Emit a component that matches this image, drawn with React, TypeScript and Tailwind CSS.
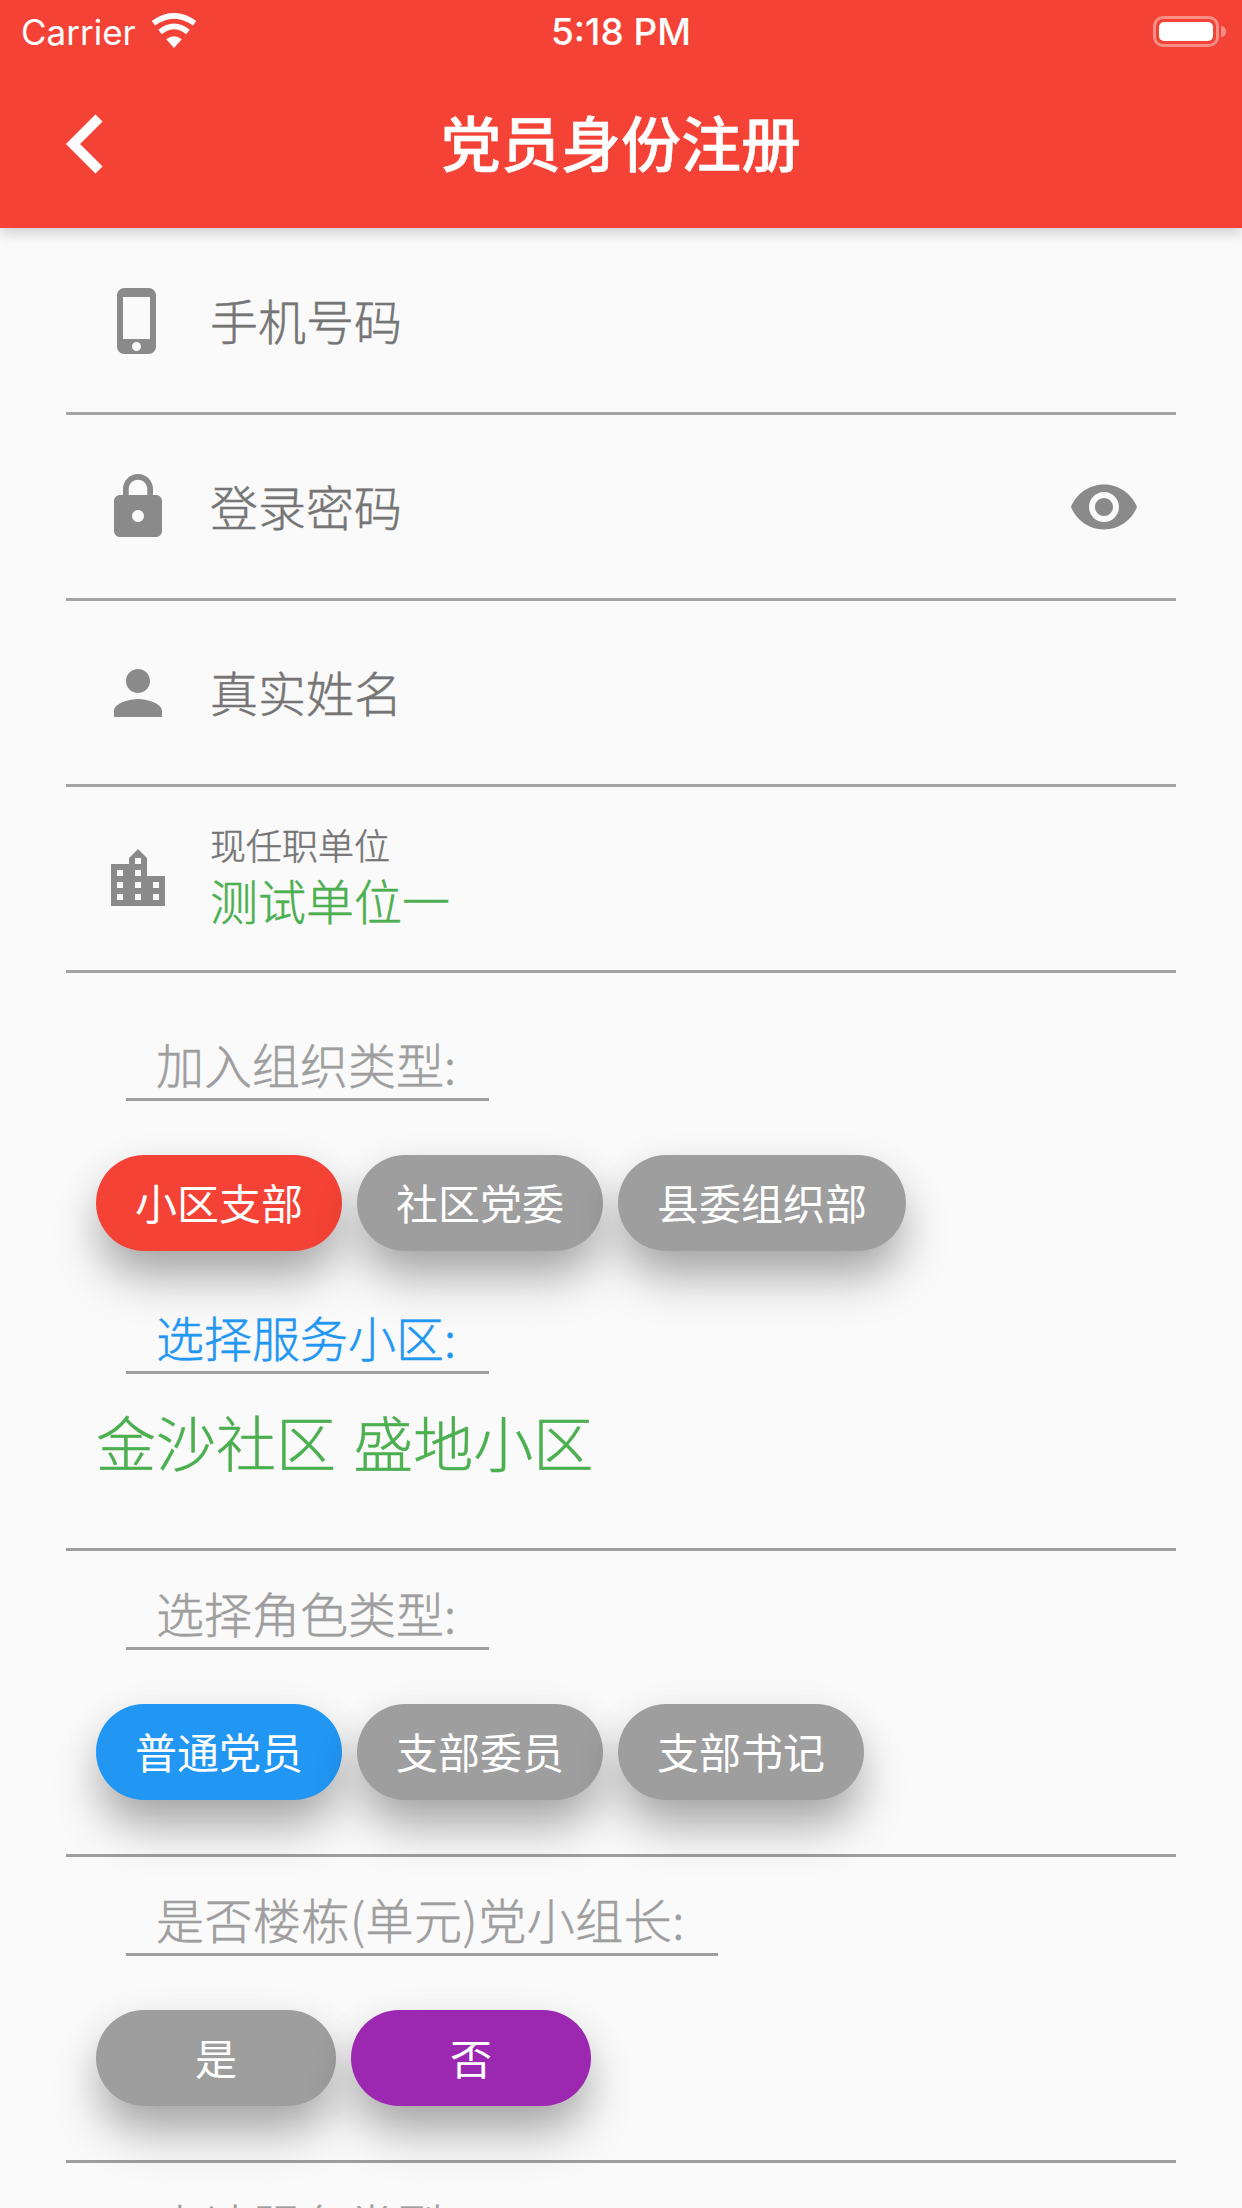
import type { ReactNode } from "react";

const CJK = "font-['Noto_Sans_CJK_SC','Liberation_Sans',sans-serif]";

const ICONS = {
  phone:
    "M15.5 1h-8C6.12 1 5 2.12 5 3.5v17C5 21.88 6.12 23 7.5 23h8c1.38 0 2.5-1.12 2.5-2.5v-17C18 2.12 16.88 1 15.5 1zm-4 21c-.83 0-1.5-.67-1.5-1.5s.67-1.5 1.5-1.5 1.5.67 1.5 1.5-.67 1.5-1.5 1.5zm4.5-4H7V4h9v14z",
  lock: "M18 8h-1V6c0-2.76-2.24-5-5-5S7 3.24 7 6v2H6c-1.1 0-2 .9-2 2v10c0 1.1.9 2 2 2h12c1.1 0 2-.9 2-2V10c0-1.1-.9-2-2-2zm-6 9c-1.1 0-2-.9-2-2s.9-2 2-2 2 .9 2 2-.9 2-2 2zm3.1-9H8.9V6c0-1.71 1.39-3.1 3.1-3.1 1.71 0 3.1 1.39 3.1 3.1v2z",
  eye: "M12 4.5C7 4.5 2.73 7.61 1 12c1.73 4.39 6 7.5 11 7.5s9.27-3.11 11-7.5c-1.73-4.39-6-7.5-11-7.5zM12 17c-2.76 0-5-2.24-5-5s2.24-5 5-5 5 2.24 5 5-2.24 5-5 5zm0-8c-1.66 0-3 1.34-3 3s1.34 3 3 3 3-1.34 3-3-1.34-3-3-3z",
  person:
    "M12 12c2.21 0 4-1.79 4-4s-1.79-4-4-4-4 1.79-4 4 1.79 4 4 4zm0 2c-2.67 0-8 1.34-8 4v2h16v-2c0-2.66-5.33-4-8-4z",
  city: "M15 11V5l-3-3-3 3v2H3v14h18V11h-6zm-8 8H5v-2h2v2zm0-4H5v-2h2v2zm0-4H5V9h2v2zm6 8h-2v-2h2v2zm0-4h-2v-2h2v2zm0-4h-2V9h2v2zm0-4h-2V5h2v2zm6 12h-2v-2h2v2zm0-4h-2v-2h2v2z"
};

function Icon({ d }: { d: string }) {
  return (
    <svg viewBox="0 0 24 24" className="h-[72px] w-[72px] shrink-0 fill-[#8a8a8a]">
      <path d={d} />
    </svg>
  );
}

function StatusBar() {
  return (
    <div className="grid h-[60px] grid-cols-3 items-center text-white">
      <div className="flex items-center">
        <span className="ml-[21px] mt-[2px] font-['Inter',sans-serif] text-[35px] leading-[60px]">Carrier</span>
        <svg viewBox="0 0 44 34" className="mb-[1px] ml-[15px] h-[35px] w-[46px]">
          <path d="M22 34 L14.5 25.5 Q22 19.5 29.5 25.5 Z" fill="#fff" />
          <path d="M8.5 18.5 Q22 7.5 35.5 18.5" fill="none" stroke="#fff" strokeWidth="5.5" />
          <path d="M2 10 Q22 -4.5 42 10" fill="none" stroke="#fff" strokeWidth="5.5" />
        </svg>
      </div>
      <div className="mt-[2px] whitespace-nowrap text-center font-['Inter',sans-serif] text-[37px] font-medium leading-[60px]">
        5:18 PM
      </div>
      <div className="flex items-center justify-end pr-[16px]">
        <div className="h-[31px] w-[66px] rounded-[10px] border-[3px] border-white/40 p-[3px]">
          <div className="h-full w-full rounded-[5px] bg-white" />
        </div>
        <div className="ml-[2px] h-[11px] w-[5px] rounded-r-full bg-white/40" />
      </div>
    </div>
  );
}

function Header() {
  return (
    <header className="relative z-10 h-[228px] bg-[#f44336] shadow-[0_6px_12px_rgba(0,0,0,0.16)]">
      <StatusBar />
      <div className="grid h-[168px] grid-cols-[1fr_auto_1fr] items-center">
        <svg viewBox="0 0 37 72" className="ml-[66px] h-[72px] w-[37px] fill-none stroke-white stroke-[10]">
          <polyline points="33,10 7,36 33,62" />
        </svg>
        <h1 className="pb-[6px] text-[60px] font-medium leading-[72px] text-white [-webkit-text-stroke:0.5px_white]">
          党员身份注册
        </h1>
        <div />
      </div>
    </header>
  );
}

function Row({ icon, children, trailing }: { icon: string; children: ReactNode; trailing?: ReactNode }) {
  return (
    <div className="flex h-[186px] items-center border-b-[3px] border-[#a3a3a3] pl-[36px] pr-[36px]">
      <Icon d={icon} />
      <div className="ml-[36px]">{children}</div>
      {trailing ? <div className="ml-auto">{trailing}</div> : null}
    </div>
  );
}

function Placeholder({ text }: { text: string }) {
  return (
    <div className="pb-[4px] text-[48px] font-light leading-[60px] text-[#757575] [-webkit-text-stroke:0.5px]">
      {text}
    </div>
  );
}

function Label({
  text,
  active = false,
  className = "",
  labelClass = ""
}: {
  text: string;
  active?: boolean;
  className?: string;
  labelClass?: string;
}) {
  return (
    <div className={className}>
      <div
        className={`ml-[60px] inline-block border-b-[3px] border-[#9e9e9e] pb-[7px] pl-[30px] pr-[33px] text-[48px] font-light leading-[56px] [-webkit-text-stroke:0.5px] ${labelClass} ${
          active ? "text-[#2196f3]" : "text-[#9e9e9e]"
        }`}
      >
        {text}
      </div>
    </div>
  );
}

const PILL_SHADOW = "shadow-[0_30px_48px_-4px_rgba(0,0,0,0.3),0_10px_40px_0_rgba(0,0,0,0.08)]";

function Pills({ items, active, color }: { items: string[]; active: string; color: string }) {
  return (
    <div className="ml-[30px] mt-[54px] flex gap-[15px]">
      {items.map((item) => (
        <div
          key={item}
          className={`flex h-[96px] min-w-[240px] items-center justify-center rounded-[48px] px-[39px] pb-[3px] text-[42px] leading-[56px] text-white ${PILL_SHADOW} ${
            item === active ? color : "bg-[#9e9e9e]"
          }`}
        >
          {item}
        </div>
      ))}
    </div>
  );
}

export default function App() {
  return (
    <div className={`h-[2208px] w-[1242px] overflow-hidden bg-[#fafafa] ${CJK}`}>
      <Header />
      <main className="mx-[66px] pt-[1px]">
        <Row icon={ICONS.phone}>
          <Placeholder text="手机号码" />
        </Row>
        <Row icon={ICONS.lock} trailing={<Icon d={ICONS.eye} />}>
          <Placeholder text="登录密码" />
        </Row>
        <Row icon={ICONS.person}>
          <Placeholder text="真实姓名" />
        </Row>
        <Row icon={ICONS.city}>
          <div className="pb-[10px] font-light [-webkit-text-stroke:0.5px]">
            <div className="text-[36px] leading-[50px] text-[#757575]">现任职单位</div>
            <div className="text-[48px] leading-[60px] text-[#4caf50]">测试单位一</div>
          </div>
        </Row>

        <section className="border-b-[3px] border-[#9e9e9e] pb-[71px] pt-[62px]">
          <Label text="加入组织类型:" />
          <Pills items={["小区支部", "社区党委", "县委组织部"]} active="小区支部" color="bg-[#f44336]" />
          <Label text="选择服务小区:" active className="mt-[57px]" />
          <div className="ml-[30px] mt-[31px] text-[60px] font-light leading-[72px] text-[#4caf50] [-webkit-text-stroke:0.5px] [word-spacing:4px]">
            金沙社区 盛地小区
          </div>
        </section>

        <section className="border-b-[3px] border-[#9e9e9e] pb-[54px] pt-[33px]">
          <Label text="选择角色类型:" />
          <Pills items={["普通党员", "支部委员", "支部书记"]} active="普通党员" color="bg-[#2196f3]" />
        </section>

        <section className="border-b-[3px] border-[#9e9e9e] pb-[54px] pt-[33px]">
          <Label text="是否楼栋(单元)党小组长:" labelClass="tracking-[0.5px]" />
          <Pills items={["是", "否"]} active="否" color="bg-[#9c27b0]" />
        </section>

        <section className="pt-[33px]">
          <Label text="申请服务类型:" />
        </section>
      </main>
    </div>
  );
}
